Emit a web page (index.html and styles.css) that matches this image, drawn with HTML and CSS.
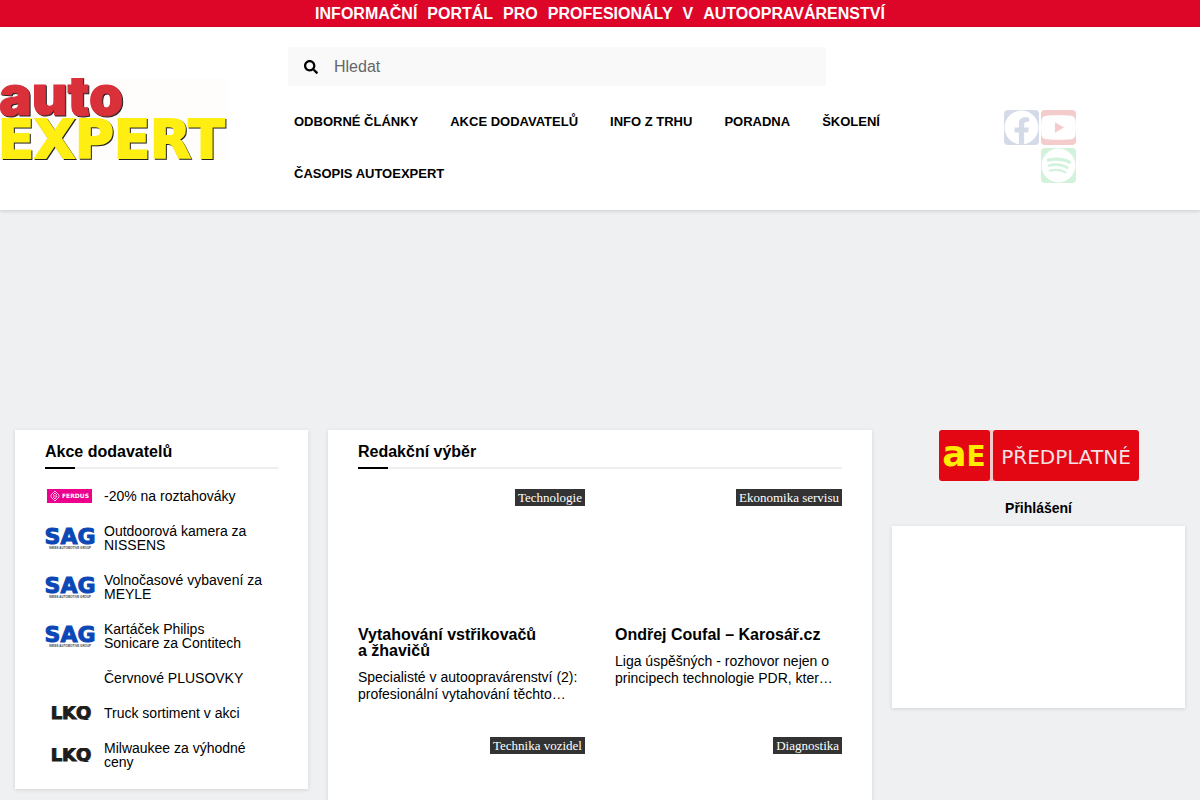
FILE: index.html
```html
<!DOCTYPE html>
<html lang="cs">
<head>
    <meta charset="UTF-8">
    <meta name="viewport" content="width=device-width, initial-scale=1.0">
    <title>autoEXPERT</title>
    <link rel="stylesheet" href="styles.css">
</head>
<body>

    <!-- Logos used more than once in the supplier list -->
    <svg class="symbols" aria-hidden="true">
        <symbol id="sag" viewBox="0 0 50 24">
            <text class="sag-name" x="25" y="18" text-anchor="middle">SAG</text>
            <text class="sag-claim" x="25" y="23" text-anchor="middle">SWISS AUTOMOTIVE GROUP</text>
        </symbol>
        <symbol id="lkq" viewBox="0 0 50 14">
            <text class="lkq-name" x="26" y="13" text-anchor="middle">LKQ</text>
        </symbol>
    </svg>

    <div class="topbar">
        <span>INFORMAČNÍ</span>
        <span>PORTÁL</span>
        <span>PRO</span>
        <span>PROFESIONÁLY</span>
        <span>V</span>
        <span>AUTOOPRAVÁRENSTVÍ</span>
    </div>

    <header class="header">
        <a class="logo" href="#" aria-label="autoEXPERT">
            <svg viewBox="0 0 228 82">
                <rect width="228" height="82" fill="#fffdfc"/>
                <text class="logo-auto" x="-1" y="37">auto</text>
                <text class="logo-expert" x="-2" y="80">EXPERT</text>
            </svg>
        </a>

        <div class="header-main">
            <form class="search">
                <svg viewBox="0 0 512 512" width="14" height="14"><path d="M505 442.700L405.300 343c-4.500-4.500-10.600-7-17-7H372c27.600-35.300 44-79.700 44-128C416 93.100 322.900 0 208 0S0 93.100 0 208s93.100 208 208 208c48.300 0 92.700-16.400 128-44v16.300c0 6.400 2.500 12.500 7 17l99.700 99.700c9.400 9.400 24.600 9.400 33.900 0l28.300-28.300c9.400-9.400 9.400-24.600.1-34zM208 336c-70.700 0-128-57.200-128-128 0-70.700 57.200-128 128-128 70.700 0 128 57.200 128 128 0 70.700-57.200 128-128 128z"/></svg>
                <input type="search" placeholder="Hledat" aria-label="Hledat">
            </form>
            <nav class="menu">
                <a href="#">ODBORNÉ ČLÁNKY</a>
                <a href="#">AKCE DODAVATELŮ</a>
                <a href="#">INFO Z TRHU</a>
                <a href="#">PORADNA</a>
                <a href="#">ŠKOLENÍ</a>
                <a href="#">ČASOPIS AUTOEXPERT</a>
            </nav>
        </div>

        <div class="socials">
            <a class="facebook" href="#" aria-label="Facebook">
                <svg viewBox="0 0 512 512"><path d="M504 256C504 119 393 8 256 8S8 119 8 256c0 123.780 90.690 226.380 209.250 245V327.690h-63V256h63v-54.640c0-62.150 37-96.480 93.670-96.480 27.140 0 55.520 4.840 55.520 4.840v61h-31.280c-30.800 0-40.410 19.120-40.410 38.730V256h68.780l-11 71.690h-57.780V501C413.310 482.380 504 379.780 504 256z"/></svg>
            </a>
            <a class="youtube" href="#" aria-label="YouTube">
                <svg viewBox="14 0 548 512"><path d="M549.655 124.083c-6.281-23.650-24.787-42.276-48.284-48.597C458.781 64 288 64 288 64S117.220 64 74.629 75.486c-23.497 6.322-42.003 24.947-48.284 48.597-11.412 42.867-11.412 132.305-11.412 132.305s0 89.438 11.412 132.305c6.281 23.650 24.787 41.500 48.284 47.821C117.220 448 288 448 288 448s170.780 0 213.371-11.486c23.497-6.321 42.003-24.171 48.284-47.821 11.412-42.867 11.412-132.305 11.412-132.305s0-89.438-11.412-132.305zm-317.510 213.508V175.185l142.739 81.205-142.739 81.201z"/></svg>
            </a>
            <a class="spotify" href="#" aria-label="Spotify">
                <svg viewBox="0 0 496 512"><path d="M248 8C111.100 8 0 119.100 0 256s111.100 248 248 248 248-111.100 248-248S384.900 8 248 8zm100.700 364.900c-4.200 0-6.800-1.300-10.700-3.600-62.400-37.600-135-39.200-206.700-24.500-3.900 1-9 2.600-11.900 2.600-9.700 0-15.800-7.700-15.800-15.800 0-10.300 6.100-15.200 13.600-16.800 81.900-18.100 165.600-16.500 237 26.200 6.100 3.900 9.700 7.400 9.700 16.500s-7.100 15.400-15.200 15.400zm26.900-65.600c-5.200 0-8.700-2.300-12.300-4.200-62.500-37-155.700-51.900-238.600-29.400-4.800 1.300-7.400 2.600-11.900 2.600-10.700 0-19.400-8.700-19.400-19.400s5.200-17.800 15.500-20.700c27.800-7.800 56.200-13.600 97.800-13.600 64.900 0 127.600 16.100 177 45.500 8.100 4.800 11.300 11 11.300 19.700-.1 10.800-8.500 19.500-19.400 19.500zm31-76.200c-5.200 0-8.400-1.300-12.900-3.900-71.200-42.500-198.500-52.700-280.900-29.700-3.600 1-8.100 2.600-12.900 2.600-13.200 0-23.300-10.300-23.300-23.600 0-13.600 8.400-21.300 17.400-23.900 35.200-10.300 74.600-15.200 117.500-15.200 73 0 149.500 15.200 205.400 47.800 7.800 4.500 12.900 10.700 12.900 22.600 0 13.600-11 23.300-23.200 23.300z"/></svg>
            </a>
        </div>
    </header>

    <main class="content">
        <section class="card">
            <h2 class="card-title">Akce dodavatelů</h2>
            <ul class="offers">
                <li>
                    <svg class="brand" viewBox="0 0 50 14" height="14">
                        <rect x="2" width="45" height="14" fill="#ec008c"/>
                        <path d="M6 6L10 2L14 6M6 8L10 12L14 8M5 7H7M8 6L10 4L12 6M8 7H12L10 10L8 8M13 7H15" fill="none" stroke="#fff" stroke-width=".7"/>
                        <text class="ferdus-name" x="17" y="9">FERDUS</text>
                    </svg>
                    <a href="#">-20% na roztahováky</a>
                </li>
                <li>
                    <svg class="brand" height="24"><use href="#sag"/></svg>
                    <a href="#">Outdoorová kamera za NISSENS</a>
                </li>
                <li>
                    <svg class="brand" height="24"><use href="#sag"/></svg>
                    <a href="#">Volnočasové vybavení za MEYLE</a>
                </li>
                <li>
                    <svg class="brand" height="24"><use href="#sag"/></svg>
                    <a href="#">Kartáček Philips Sonicare za Contitech</a>
                </li>
                <li>
                    <span class="brand"></span>
                    <a href="#">Červnové PLUSOVKY</a>
                </li>
                <li>
                    <svg class="brand" height="14"><use href="#lkq"/></svg>
                    <a href="#">Truck sortiment v akci</a>
                </li>
                <li>
                    <svg class="brand" height="14"><use href="#lkq"/></svg>
                    <a href="#">Milwaukee za výhodné ceny</a>
                </li>
            </ul>
        </section>

        <section class="card">
            <h2 class="card-title">Redakční výběr</h2>
            <div class="articles">
                <article>
                    <div class="thumb"><a class="tag" href="#">Technologie</a></div>
                    <h3><a href="#">Vytahování vstřikovačů a&nbsp;žhavičů</a></h3>
                    <p>Specialisté v autoopravárenství (2): profesionální vytahování těchto…</p>
                </article>
                <article>
                    <div class="thumb"><a class="tag" href="#">Ekonomika servisu</a></div>
                    <h3><a href="#">Ondřej Coufal – Karosář.cz</a></h3>
                    <p>Liga úspěšných - rozhovor nejen o principech technologie PDR, kter…</p>
                </article>
                <article>
                    <div class="thumb"><a class="tag" href="#">Technika vozidel</a></div>
                </article>
                <article>
                    <div class="thumb"><a class="tag" href="#">Diagnostika</a></div>
                </article>
            </div>
        </section>

        <aside class="sidebar">
            <a class="subscribe" href="#" aria-label="Předplatné">
                <svg viewBox="0 0 200 51" width="200" height="51">
                    <rect x="2" width="196" height="51" fill="#f6c9cb"/>
                    <rect width="51" height="51" rx="3" fill="#e30613"/>
                    <rect x="54" width="146" height="51" rx="3" fill="#e30613"/>
                    <text class="sub-ae" x="25" y="36" text-anchor="middle">a<tspan class="sub-e">E</tspan></text>
                    <text class="sub-label" x="127" y="34" text-anchor="middle">PŘEDPLATNÉ</text>
                </svg>
            </a>
            <h2 class="login-title">Přihlášení</h2>
            <div class="login-box"></div>
        </aside>
    </main>

</body>
</html>
```
FILE: styles.css
```css
* {
    box-sizing: border-box;
}

body {
    margin: 0;
    background-color: #eff0f2;
    color: #000;
    font-family: "Liberation Sans", Arial, sans-serif;
    font-size: 14px;
}

a {
    color: inherit;
    text-decoration: none;
}

h2, h3, p, ul {
    margin: 0;
    padding: 0;
}

.symbols {
    display: none;
}

/* Top bar */
.topbar {
    display: flex;
    justify-content: center;
    gap: 10px;
    background-color: #dd0528;
    color: #fff;
    font-size: 16px;
    font-weight: bold;
    line-height: 27px;
}

/* Header */
.header {
    display: grid;
    grid-template-columns: 19% minmax(0, 1fr) 25%;
    align-items: center;
    background-color: #fff;
    box-shadow: 0 1px 4px rgba(0, 0, 0, 0.16);
}

.logo svg {
    display: block;
    width: 100%;
}

.logo-auto,
.logo-expert {
    filter: drop-shadow(1px 1px 0 #222);
}

.logo-auto {
    font-family: Inter, sans-serif;
    font-size: 55px;
    font-weight: 900;
    fill: #d9303a;
    stroke: #d9303a;
}

.logo-expert {
    font-family: "DejaVu Sans", sans-serif;
    font-size: 53px;
    font-weight: bold;
    fill: #ffee12;
    stroke: #ffee12;
    stroke-width: 2px;
}

.header-main {
    padding: 20px 0 10px 50px;
}

.search {
    display: flex;
    align-items: center;
    gap: 16px;
    margin: 0 74px 10px 10px;
    padding: 0 16px;
    background-color: #f9f9f9;
}

.search input {
    flex: 1;
    height: 39px;
    padding: 0;
    border: none;
    outline: none;
    background: none;
    font-family: inherit;
    font-size: 16px;
}

.search input::placeholder {
    color: #666;
}

.menu {
    display: flex;
    flex-wrap: wrap;
}

.menu a {
    padding: 0 16px;
    font-size: 13px;
    font-weight: bold;
    line-height: 52px;
}

.socials {
    display: flex;
    flex-wrap: wrap;
    justify-content: flex-end;
    gap: 3px 2px;
    width: 72px;
    margin: 56px auto 0 104px;
}

.socials a {
    width: 35px;
    height: 35px;
    border-radius: 4px;
}

.socials svg {
    display: block;
    width: 35px;
    height: 35px;
    fill: #fff;
}

.facebook {
    background-color: #d5dae9;
}

.youtube {
    background-color: #f4cccc;
}

.spotify {
    background-color: #d2f2dc;
}

/* Content */
.content {
    display: grid;
    grid-template-columns: 7fr 13fr 7fr;
    align-items: start;
    gap: 20px;
    padding: 220px 15px 20px;
}

.card {
    padding: 0 30px 20px;
    background-color: #fff;
    box-shadow: 0 1px 4px rgba(0, 0, 0, 0.12);
}

.card-title {
    margin-bottom: 20px;
    padding: 6px 0;
    border-bottom: 2px solid #eee;
    font-size: 16px;
    line-height: 31px;
    height: 39px;
}

.card-title::after {
    content: "";
    display: block;
    width: 30px;
    height: 2px;
    background-color: #000;
}

.offers {
    display: grid;
    gap: 21px;
    list-style: none;
}

.offers li {
    display: grid;
    grid-template-columns: 50px 1fr;
    align-items: center;
    gap: 9px;
    padding-right: 15px;
    line-height: 14px;
}

.brand {
    width: 50px;
}

.sag-name {
    fill: #0b47b5;
    stroke: #0b47b5;
    font-family: "DejaVu Sans", sans-serif;
    font-size: 22px;
    font-weight: bold;
}

.sag-claim {
    fill: #444;
    font-size: 3px;
    font-weight: bold;
}

.lkq-name {
    fill: #1d1d1b;
    stroke: #1d1d1b;
    font-family: "DejaVu Sans", sans-serif;
    font-size: 18px;
    font-weight: bold;
}

.ferdus-name {
    fill: #fff;
    font-family: "DejaVu Sans", sans-serif;
    font-size: 6px;
    font-weight: bold;
}

.articles {
    display: grid;
    grid-template-columns: 1fr 1fr;
    gap: 34px 30px;
}

.thumb {
    display: flex;
    align-items: flex-start;
    justify-content: flex-end;
    height: 138px;
}

.tag {
    padding: 0 3px;
    background-color: #333;
    color: #fff;
    font-family: "Liberation Serif", "Times New Roman", serif;
    font-size: 13px;
    line-height: 17px;
}

.articles h3 {
    margin-bottom: 10px;
    font-size: 16px;
    line-height: 16px;
}

.articles p {
    line-height: 17px;
}

/* Sidebar */
.sidebar {
    text-align: center;
}

.subscribe svg {
    display: block;
    margin: 0 auto;
}

.sub-ae {
    fill: #ffed00;
    font-family: "DejaVu Sans", sans-serif;
    font-size: 36px;
    font-weight: bold;
}

.sub-e {
    font-size: 28px;
}

.sub-label {
    fill: #f3e3e6;
    font-family: "DejaVu Sans", sans-serif;
    font-size: 20px;
}

.login-title {
    padding: 18px 0 9px;
    font-size: 14px;
    line-height: 18px;
}

.login-box {
    height: 182px;
    background-color: #fff;
    box-shadow: 0 1px 4px rgba(0, 0, 0, 0.12);
}
```
